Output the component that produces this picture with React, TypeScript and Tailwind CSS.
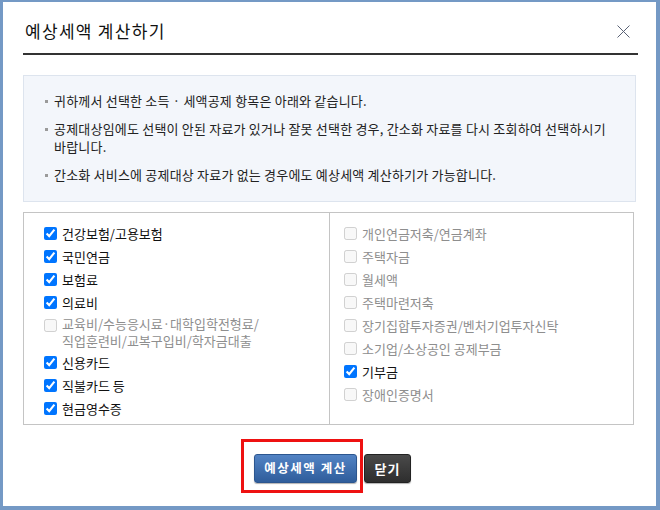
const font = "font-['Noto_Sans_CJK_KR','Noto_Sans',sans-serif]"

const notices = [
  "귀하께서 선택한 소득 · 세액공제 항목은 아래와 같습니다.",
  "공제대상임에도 선택이 안된 자료가 있거나 잘못 선택한 경우, 간소화 자료를 다시 조회하여 선택하시기\n바랍니다.",
  "간소화 서비스에 공제대상 자료가 없는 경우에도 예상세액 계산하기가 가능합니다.",
]

type Item = { label: string; checked: boolean }

const leftItems: Item[] = [
  { label: "건강보험/고용보험", checked: true },
  { label: "국민연금", checked: true },
  { label: "보험료", checked: true },
  { label: "의료비", checked: true },
  { label: "교육비/수능응시료·대학입학전형료/\n직업훈련비/교복구입비/학자금대출", checked: false },
  { label: "신용카드", checked: true },
  { label: "직불카드 등", checked: true },
  { label: "현금영수증", checked: true },
]

const rightItems: Item[] = [
  { label: "개인연금저축/연금계좌", checked: false },
  { label: "주택자금", checked: false },
  { label: "월세액", checked: false },
  { label: "주택마련저축", checked: false },
  { label: "장기집합투자증권/벤처기업투자신탁", checked: false },
  { label: "소기업/소상공인 공제부금", checked: false },
  { label: "기부금", checked: true },
  { label: "장애인증명서", checked: false },
]

function Row({ item }: { item: Item }) {
  const multi = item.label.includes("\n")
  return (
    <label className={`flex items-start gap-[5px] ${multi ? "pt-[1px] pb-[2px]" : ""}`}>
      <input
        type="checkbox"
        checked={item.checked}
        disabled={!item.checked}
        readOnly
        className={`w-[13px] h-[13px] shrink-0 accent-[#0075ff] ${multi ? "mt-[4px]" : "mt-[5px]"}`}
      />
      <span className={`text-[13px] whitespace-pre-line ${multi ? "leading-[17px]" : "leading-[23px]"} ${item.checked ? "text-[#111]" : "text-[#8e8e8e]"}`}>
        {item.label}
      </span>
    </label>
  )
}

export default function App() {
  return (
    <div className={`${font} w-[660px] h-[510px] bg-white border-[#7499c5] border-l-[3px] border-t-[2px] border-r-[4px] border-b-[4px] flex flex-col`}>
      <div className="ml-[20px] mr-[18px] h-[53px] border-b-2 border-[#333] flex items-center justify-between pt-[6px]">
        <h1 className="text-[17px] font-normal text-[#111] leading-[20px] pl-[2px] tracking-[1.3px]">예상세액 계산하기</h1>
        <svg width="13" height="13" viewBox="0 0 13 13" className="mr-[8px] mt-[2px]">
          <path d="M0.5 0.5 L12.5 12.5 M12.5 0.5 L0.5 12.5" stroke="#5a6275" strokeWidth="1" />
        </svg>
      </div>

      <div className="mt-[20px] ml-[20px] mr-[20px] bg-[#f3f6fb] border border-[#dde4ee] pt-[16px] pb-[17px] pl-[21px] flex flex-col gap-[10px]">
        {notices.map((text, i) => (
          <div key={i} className="flex items-start text-[13px] tracking-[0.2px] leading-[18px] text-[#222]">
            <span className="w-[3px] h-[3px] bg-[#9a9a9a] mt-[8px] mr-[6px] shrink-0" />
            <span className="whitespace-pre-line">{text}</span>
          </div>
        ))}
      </div>

      <div className="mt-[10px] ml-[20px] mr-[22px] h-[213px] border border-[#c4c4c4] flex">
        <div className="w-[306px] border-r border-[#c4c4c4] pt-[9px] pl-[20px] flex flex-col">
          {leftItems.map((it) => (
            <Row key={it.label} item={it} />
          ))}
        </div>
        <div className="flex-1 pt-[9px] pl-[14px] flex flex-col">
          {rightItems.map((it) => (
            <Row key={it.label} item={it} />
          ))}
        </div>
      </div>

      <div className="mt-[14px] flex justify-center pr-[7px]">
        <div className="w-[122px] h-[54px] border-[3px] border-[#ee1111] pl-[10px] pt-[12px]">
          <button className="w-[103px] h-[29px] rounded-[3px] bg-gradient-to-b from-[#5283c4] to-[#2f5d9b] border border-[#2c568f] text-white text-[12.5px] font-bold tracking-[1.5px] shadow-[0_1px_1px_rgba(0,0,0,0.3)]">
            예상세액 계산
          </button>
        </div>
        <div className="pt-[15px] pl-[1px]">
          <button className="w-[47px] h-[29px] rounded-[3px] bg-gradient-to-b from-[#4a4a4a] to-[#2e2e2e] border border-[#222] text-white text-[13px] font-bold tracking-[1px] shadow-[0_1px_1px_rgba(0,0,0,0.3)]">
            닫기
          </button>
        </div>
      </div>
    </div>
  )
}
